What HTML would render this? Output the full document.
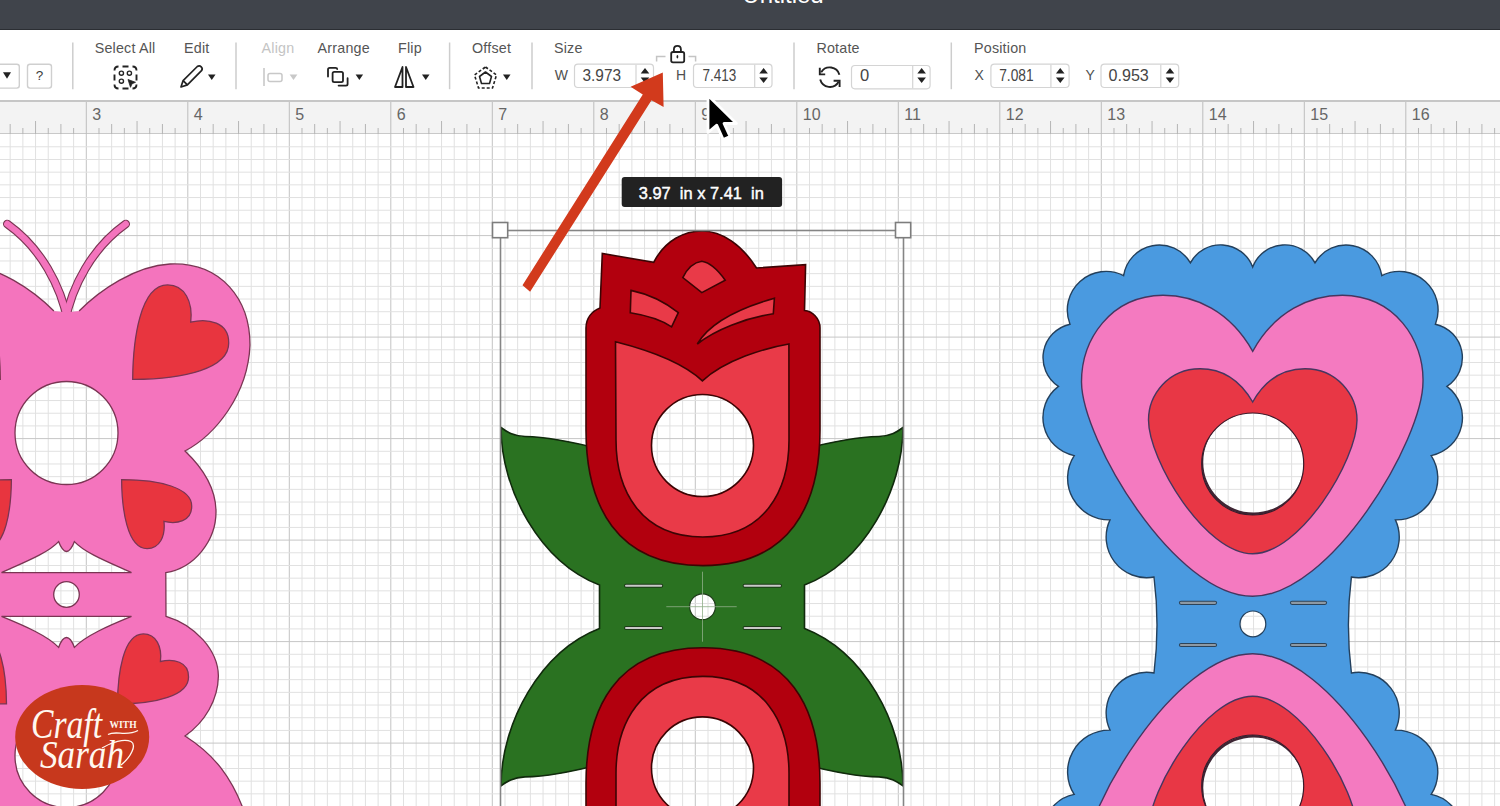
<!DOCTYPE html>
<html><head><meta charset="utf-8"><title>Design</title>
<style>
html,body{margin:0;padding:0;width:1500px;height:806px;overflow:hidden;background:#fff;}
svg{position:absolute;left:0;top:0;font-family:"Liberation Sans",sans-serif;}
</style></head><body>
<svg width="1500" height="806" viewBox="0 0 1500 806">
<rect x="0" y="0" width="1500" height="806" fill="#fff"/>
<line x1="10.17" y1="134" x2="10.17" y2="806" stroke="#e1e1e1" stroke-width="1"/>
<line x1="22.86" y1="134" x2="22.86" y2="806" stroke="#e1e1e1" stroke-width="1"/>
<line x1="35.55" y1="134" x2="35.55" y2="806" stroke="#e1e1e1" stroke-width="1"/>
<line x1="48.24" y1="134" x2="48.24" y2="806" stroke="#e1e1e1" stroke-width="1"/>
<line x1="60.92" y1="134" x2="60.92" y2="806" stroke="#e1e1e1" stroke-width="1"/>
<line x1="73.61" y1="134" x2="73.61" y2="806" stroke="#e1e1e1" stroke-width="1"/>
<line x1="86.3" y1="134" x2="86.3" y2="806" stroke="#c3c3c3" stroke-width="1"/>
<line x1="98.99" y1="134" x2="98.99" y2="806" stroke="#e1e1e1" stroke-width="1"/>
<line x1="111.67" y1="134" x2="111.67" y2="806" stroke="#e1e1e1" stroke-width="1"/>
<line x1="124.36" y1="134" x2="124.36" y2="806" stroke="#e1e1e1" stroke-width="1"/>
<line x1="137.05" y1="134" x2="137.05" y2="806" stroke="#e1e1e1" stroke-width="1"/>
<line x1="149.74" y1="134" x2="149.74" y2="806" stroke="#e1e1e1" stroke-width="1"/>
<line x1="162.43" y1="134" x2="162.43" y2="806" stroke="#e1e1e1" stroke-width="1"/>
<line x1="175.11" y1="134" x2="175.11" y2="806" stroke="#e1e1e1" stroke-width="1"/>
<line x1="187.8" y1="134" x2="187.8" y2="806" stroke="#c3c3c3" stroke-width="1"/>
<line x1="200.49" y1="134" x2="200.49" y2="806" stroke="#e1e1e1" stroke-width="1"/>
<line x1="213.18" y1="134" x2="213.18" y2="806" stroke="#e1e1e1" stroke-width="1"/>
<line x1="225.86" y1="134" x2="225.86" y2="806" stroke="#e1e1e1" stroke-width="1"/>
<line x1="238.55" y1="134" x2="238.55" y2="806" stroke="#e1e1e1" stroke-width="1"/>
<line x1="251.24" y1="134" x2="251.24" y2="806" stroke="#e1e1e1" stroke-width="1"/>
<line x1="263.93" y1="134" x2="263.93" y2="806" stroke="#e1e1e1" stroke-width="1"/>
<line x1="276.61" y1="134" x2="276.61" y2="806" stroke="#e1e1e1" stroke-width="1"/>
<line x1="289.3" y1="134" x2="289.3" y2="806" stroke="#c3c3c3" stroke-width="1"/>
<line x1="301.99" y1="134" x2="301.99" y2="806" stroke="#e1e1e1" stroke-width="1"/>
<line x1="314.68" y1="134" x2="314.68" y2="806" stroke="#e1e1e1" stroke-width="1"/>
<line x1="327.36" y1="134" x2="327.36" y2="806" stroke="#e1e1e1" stroke-width="1"/>
<line x1="340.05" y1="134" x2="340.05" y2="806" stroke="#e1e1e1" stroke-width="1"/>
<line x1="352.74" y1="134" x2="352.74" y2="806" stroke="#e1e1e1" stroke-width="1"/>
<line x1="365.43" y1="134" x2="365.43" y2="806" stroke="#e1e1e1" stroke-width="1"/>
<line x1="378.11" y1="134" x2="378.11" y2="806" stroke="#e1e1e1" stroke-width="1"/>
<line x1="390.8" y1="134" x2="390.8" y2="806" stroke="#c3c3c3" stroke-width="1"/>
<line x1="403.49" y1="134" x2="403.49" y2="806" stroke="#e1e1e1" stroke-width="1"/>
<line x1="416.18" y1="134" x2="416.18" y2="806" stroke="#e1e1e1" stroke-width="1"/>
<line x1="428.86" y1="134" x2="428.86" y2="806" stroke="#e1e1e1" stroke-width="1"/>
<line x1="441.55" y1="134" x2="441.55" y2="806" stroke="#e1e1e1" stroke-width="1"/>
<line x1="454.24" y1="134" x2="454.24" y2="806" stroke="#e1e1e1" stroke-width="1"/>
<line x1="466.93" y1="134" x2="466.93" y2="806" stroke="#e1e1e1" stroke-width="1"/>
<line x1="479.61" y1="134" x2="479.61" y2="806" stroke="#e1e1e1" stroke-width="1"/>
<line x1="492.3" y1="134" x2="492.3" y2="806" stroke="#c3c3c3" stroke-width="1"/>
<line x1="504.99" y1="134" x2="504.99" y2="806" stroke="#e1e1e1" stroke-width="1"/>
<line x1="517.67" y1="134" x2="517.67" y2="806" stroke="#e1e1e1" stroke-width="1"/>
<line x1="530.36" y1="134" x2="530.36" y2="806" stroke="#e1e1e1" stroke-width="1"/>
<line x1="543.05" y1="134" x2="543.05" y2="806" stroke="#e1e1e1" stroke-width="1"/>
<line x1="555.74" y1="134" x2="555.74" y2="806" stroke="#e1e1e1" stroke-width="1"/>
<line x1="568.42" y1="134" x2="568.42" y2="806" stroke="#e1e1e1" stroke-width="1"/>
<line x1="581.11" y1="134" x2="581.11" y2="806" stroke="#e1e1e1" stroke-width="1"/>
<line x1="593.8" y1="134" x2="593.8" y2="806" stroke="#c3c3c3" stroke-width="1"/>
<line x1="606.49" y1="134" x2="606.49" y2="806" stroke="#e1e1e1" stroke-width="1"/>
<line x1="619.17" y1="134" x2="619.17" y2="806" stroke="#e1e1e1" stroke-width="1"/>
<line x1="631.86" y1="134" x2="631.86" y2="806" stroke="#e1e1e1" stroke-width="1"/>
<line x1="644.55" y1="134" x2="644.55" y2="806" stroke="#e1e1e1" stroke-width="1"/>
<line x1="657.24" y1="134" x2="657.24" y2="806" stroke="#e1e1e1" stroke-width="1"/>
<line x1="669.92" y1="134" x2="669.92" y2="806" stroke="#e1e1e1" stroke-width="1"/>
<line x1="682.61" y1="134" x2="682.61" y2="806" stroke="#e1e1e1" stroke-width="1"/>
<line x1="695.3" y1="134" x2="695.3" y2="806" stroke="#c3c3c3" stroke-width="1"/>
<line x1="707.99" y1="134" x2="707.99" y2="806" stroke="#e1e1e1" stroke-width="1"/>
<line x1="720.67" y1="134" x2="720.67" y2="806" stroke="#e1e1e1" stroke-width="1"/>
<line x1="733.36" y1="134" x2="733.36" y2="806" stroke="#e1e1e1" stroke-width="1"/>
<line x1="746.05" y1="134" x2="746.05" y2="806" stroke="#e1e1e1" stroke-width="1"/>
<line x1="758.74" y1="134" x2="758.74" y2="806" stroke="#e1e1e1" stroke-width="1"/>
<line x1="771.42" y1="134" x2="771.42" y2="806" stroke="#e1e1e1" stroke-width="1"/>
<line x1="784.11" y1="134" x2="784.11" y2="806" stroke="#e1e1e1" stroke-width="1"/>
<line x1="796.8" y1="134" x2="796.8" y2="806" stroke="#c3c3c3" stroke-width="1"/>
<line x1="809.49" y1="134" x2="809.49" y2="806" stroke="#e1e1e1" stroke-width="1"/>
<line x1="822.17" y1="134" x2="822.17" y2="806" stroke="#e1e1e1" stroke-width="1"/>
<line x1="834.86" y1="134" x2="834.86" y2="806" stroke="#e1e1e1" stroke-width="1"/>
<line x1="847.55" y1="134" x2="847.55" y2="806" stroke="#e1e1e1" stroke-width="1"/>
<line x1="860.24" y1="134" x2="860.24" y2="806" stroke="#e1e1e1" stroke-width="1"/>
<line x1="872.92" y1="134" x2="872.92" y2="806" stroke="#e1e1e1" stroke-width="1"/>
<line x1="885.61" y1="134" x2="885.61" y2="806" stroke="#e1e1e1" stroke-width="1"/>
<line x1="898.3" y1="134" x2="898.3" y2="806" stroke="#c3c3c3" stroke-width="1"/>
<line x1="910.99" y1="134" x2="910.99" y2="806" stroke="#e1e1e1" stroke-width="1"/>
<line x1="923.67" y1="134" x2="923.67" y2="806" stroke="#e1e1e1" stroke-width="1"/>
<line x1="936.36" y1="134" x2="936.36" y2="806" stroke="#e1e1e1" stroke-width="1"/>
<line x1="949.05" y1="134" x2="949.05" y2="806" stroke="#e1e1e1" stroke-width="1"/>
<line x1="961.74" y1="134" x2="961.74" y2="806" stroke="#e1e1e1" stroke-width="1"/>
<line x1="974.42" y1="134" x2="974.42" y2="806" stroke="#e1e1e1" stroke-width="1"/>
<line x1="987.11" y1="134" x2="987.11" y2="806" stroke="#e1e1e1" stroke-width="1"/>
<line x1="999.8" y1="134" x2="999.8" y2="806" stroke="#c3c3c3" stroke-width="1"/>
<line x1="1012.49" y1="134" x2="1012.49" y2="806" stroke="#e1e1e1" stroke-width="1"/>
<line x1="1025.17" y1="134" x2="1025.17" y2="806" stroke="#e1e1e1" stroke-width="1"/>
<line x1="1037.86" y1="134" x2="1037.86" y2="806" stroke="#e1e1e1" stroke-width="1"/>
<line x1="1050.55" y1="134" x2="1050.55" y2="806" stroke="#e1e1e1" stroke-width="1"/>
<line x1="1063.24" y1="134" x2="1063.24" y2="806" stroke="#e1e1e1" stroke-width="1"/>
<line x1="1075.92" y1="134" x2="1075.92" y2="806" stroke="#e1e1e1" stroke-width="1"/>
<line x1="1088.61" y1="134" x2="1088.61" y2="806" stroke="#e1e1e1" stroke-width="1"/>
<line x1="1101.3" y1="134" x2="1101.3" y2="806" stroke="#c3c3c3" stroke-width="1"/>
<line x1="1113.99" y1="134" x2="1113.99" y2="806" stroke="#e1e1e1" stroke-width="1"/>
<line x1="1126.67" y1="134" x2="1126.67" y2="806" stroke="#e1e1e1" stroke-width="1"/>
<line x1="1139.36" y1="134" x2="1139.36" y2="806" stroke="#e1e1e1" stroke-width="1"/>
<line x1="1152.05" y1="134" x2="1152.05" y2="806" stroke="#e1e1e1" stroke-width="1"/>
<line x1="1164.74" y1="134" x2="1164.74" y2="806" stroke="#e1e1e1" stroke-width="1"/>
<line x1="1177.42" y1="134" x2="1177.42" y2="806" stroke="#e1e1e1" stroke-width="1"/>
<line x1="1190.11" y1="134" x2="1190.11" y2="806" stroke="#e1e1e1" stroke-width="1"/>
<line x1="1202.8" y1="134" x2="1202.8" y2="806" stroke="#c3c3c3" stroke-width="1"/>
<line x1="1215.49" y1="134" x2="1215.49" y2="806" stroke="#e1e1e1" stroke-width="1"/>
<line x1="1228.17" y1="134" x2="1228.17" y2="806" stroke="#e1e1e1" stroke-width="1"/>
<line x1="1240.86" y1="134" x2="1240.86" y2="806" stroke="#e1e1e1" stroke-width="1"/>
<line x1="1253.55" y1="134" x2="1253.55" y2="806" stroke="#e1e1e1" stroke-width="1"/>
<line x1="1266.24" y1="134" x2="1266.24" y2="806" stroke="#e1e1e1" stroke-width="1"/>
<line x1="1278.92" y1="134" x2="1278.92" y2="806" stroke="#e1e1e1" stroke-width="1"/>
<line x1="1291.61" y1="134" x2="1291.61" y2="806" stroke="#e1e1e1" stroke-width="1"/>
<line x1="1304.3" y1="134" x2="1304.3" y2="806" stroke="#c3c3c3" stroke-width="1"/>
<line x1="1316.99" y1="134" x2="1316.99" y2="806" stroke="#e1e1e1" stroke-width="1"/>
<line x1="1329.67" y1="134" x2="1329.67" y2="806" stroke="#e1e1e1" stroke-width="1"/>
<line x1="1342.36" y1="134" x2="1342.36" y2="806" stroke="#e1e1e1" stroke-width="1"/>
<line x1="1355.05" y1="134" x2="1355.05" y2="806" stroke="#e1e1e1" stroke-width="1"/>
<line x1="1367.74" y1="134" x2="1367.74" y2="806" stroke="#e1e1e1" stroke-width="1"/>
<line x1="1380.42" y1="134" x2="1380.42" y2="806" stroke="#e1e1e1" stroke-width="1"/>
<line x1="1393.11" y1="134" x2="1393.11" y2="806" stroke="#e1e1e1" stroke-width="1"/>
<line x1="1405.8" y1="134" x2="1405.8" y2="806" stroke="#c3c3c3" stroke-width="1"/>
<line x1="1418.49" y1="134" x2="1418.49" y2="806" stroke="#e1e1e1" stroke-width="1"/>
<line x1="1431.17" y1="134" x2="1431.17" y2="806" stroke="#e1e1e1" stroke-width="1"/>
<line x1="1443.86" y1="134" x2="1443.86" y2="806" stroke="#e1e1e1" stroke-width="1"/>
<line x1="1456.55" y1="134" x2="1456.55" y2="806" stroke="#e1e1e1" stroke-width="1"/>
<line x1="1469.24" y1="134" x2="1469.24" y2="806" stroke="#e1e1e1" stroke-width="1"/>
<line x1="1481.92" y1="134" x2="1481.92" y2="806" stroke="#e1e1e1" stroke-width="1"/>
<line x1="1494.61" y1="134" x2="1494.61" y2="806" stroke="#e1e1e1" stroke-width="1"/>
<line x1="0" y1="146.79" x2="1500" y2="146.79" stroke="#e1e1e1" stroke-width="1"/>
<line x1="0" y1="159.47" x2="1500" y2="159.47" stroke="#e1e1e1" stroke-width="1"/>
<line x1="0" y1="172.16" x2="1500" y2="172.16" stroke="#e1e1e1" stroke-width="1"/>
<line x1="0" y1="184.85" x2="1500" y2="184.85" stroke="#e1e1e1" stroke-width="1"/>
<line x1="0" y1="197.54" x2="1500" y2="197.54" stroke="#e1e1e1" stroke-width="1"/>
<line x1="0" y1="210.22" x2="1500" y2="210.22" stroke="#e1e1e1" stroke-width="1"/>
<line x1="0" y1="222.91" x2="1500" y2="222.91" stroke="#e1e1e1" stroke-width="1"/>
<line x1="0" y1="235.6" x2="1500" y2="235.6" stroke="#c6c6c6" stroke-width="1"/>
<line x1="0" y1="248.29" x2="1500" y2="248.29" stroke="#e1e1e1" stroke-width="1"/>
<line x1="0" y1="260.98" x2="1500" y2="260.98" stroke="#e1e1e1" stroke-width="1"/>
<line x1="0" y1="273.66" x2="1500" y2="273.66" stroke="#e1e1e1" stroke-width="1"/>
<line x1="0" y1="286.35" x2="1500" y2="286.35" stroke="#e1e1e1" stroke-width="1"/>
<line x1="0" y1="299.04" x2="1500" y2="299.04" stroke="#e1e1e1" stroke-width="1"/>
<line x1="0" y1="311.73" x2="1500" y2="311.73" stroke="#e1e1e1" stroke-width="1"/>
<line x1="0" y1="324.41" x2="1500" y2="324.41" stroke="#e1e1e1" stroke-width="1"/>
<line x1="0" y1="337.1" x2="1500" y2="337.1" stroke="#c6c6c6" stroke-width="1"/>
<line x1="0" y1="349.79" x2="1500" y2="349.79" stroke="#e1e1e1" stroke-width="1"/>
<line x1="0" y1="362.48" x2="1500" y2="362.48" stroke="#e1e1e1" stroke-width="1"/>
<line x1="0" y1="375.16" x2="1500" y2="375.16" stroke="#e1e1e1" stroke-width="1"/>
<line x1="0" y1="387.85" x2="1500" y2="387.85" stroke="#e1e1e1" stroke-width="1"/>
<line x1="0" y1="400.54" x2="1500" y2="400.54" stroke="#e1e1e1" stroke-width="1"/>
<line x1="0" y1="413.23" x2="1500" y2="413.23" stroke="#e1e1e1" stroke-width="1"/>
<line x1="0" y1="425.91" x2="1500" y2="425.91" stroke="#e1e1e1" stroke-width="1"/>
<line x1="0" y1="438.6" x2="1500" y2="438.6" stroke="#c6c6c6" stroke-width="1"/>
<line x1="0" y1="451.29" x2="1500" y2="451.29" stroke="#e1e1e1" stroke-width="1"/>
<line x1="0" y1="463.98" x2="1500" y2="463.98" stroke="#e1e1e1" stroke-width="1"/>
<line x1="0" y1="476.66" x2="1500" y2="476.66" stroke="#e1e1e1" stroke-width="1"/>
<line x1="0" y1="489.35" x2="1500" y2="489.35" stroke="#e1e1e1" stroke-width="1"/>
<line x1="0" y1="502.04" x2="1500" y2="502.04" stroke="#e1e1e1" stroke-width="1"/>
<line x1="0" y1="514.73" x2="1500" y2="514.73" stroke="#e1e1e1" stroke-width="1"/>
<line x1="0" y1="527.41" x2="1500" y2="527.41" stroke="#e1e1e1" stroke-width="1"/>
<line x1="0" y1="540.1" x2="1500" y2="540.1" stroke="#c6c6c6" stroke-width="1"/>
<line x1="0" y1="552.79" x2="1500" y2="552.79" stroke="#e1e1e1" stroke-width="1"/>
<line x1="0" y1="565.48" x2="1500" y2="565.48" stroke="#e1e1e1" stroke-width="1"/>
<line x1="0" y1="578.16" x2="1500" y2="578.16" stroke="#e1e1e1" stroke-width="1"/>
<line x1="0" y1="590.85" x2="1500" y2="590.85" stroke="#e1e1e1" stroke-width="1"/>
<line x1="0" y1="603.54" x2="1500" y2="603.54" stroke="#e1e1e1" stroke-width="1"/>
<line x1="0" y1="616.23" x2="1500" y2="616.23" stroke="#e1e1e1" stroke-width="1"/>
<line x1="0" y1="628.91" x2="1500" y2="628.91" stroke="#e1e1e1" stroke-width="1"/>
<line x1="0" y1="641.6" x2="1500" y2="641.6" stroke="#c6c6c6" stroke-width="1"/>
<line x1="0" y1="654.29" x2="1500" y2="654.29" stroke="#e1e1e1" stroke-width="1"/>
<line x1="0" y1="666.98" x2="1500" y2="666.98" stroke="#e1e1e1" stroke-width="1"/>
<line x1="0" y1="679.66" x2="1500" y2="679.66" stroke="#e1e1e1" stroke-width="1"/>
<line x1="0" y1="692.35" x2="1500" y2="692.35" stroke="#e1e1e1" stroke-width="1"/>
<line x1="0" y1="705.04" x2="1500" y2="705.04" stroke="#e1e1e1" stroke-width="1"/>
<line x1="0" y1="717.73" x2="1500" y2="717.73" stroke="#e1e1e1" stroke-width="1"/>
<line x1="0" y1="730.41" x2="1500" y2="730.41" stroke="#e1e1e1" stroke-width="1"/>
<line x1="0" y1="743.1" x2="1500" y2="743.1" stroke="#c6c6c6" stroke-width="1"/>
<line x1="0" y1="755.79" x2="1500" y2="755.79" stroke="#e1e1e1" stroke-width="1"/>
<line x1="0" y1="768.48" x2="1500" y2="768.48" stroke="#e1e1e1" stroke-width="1"/>
<line x1="0" y1="781.16" x2="1500" y2="781.16" stroke="#e1e1e1" stroke-width="1"/>
<line x1="0" y1="793.85" x2="1500" y2="793.85" stroke="#e1e1e1" stroke-width="1"/>
<defs><mask id="mb"><rect x="-100" y="134" width="400" height="700" fill="#fff"/><circle cx="66.5" cy="433" r="51.5" fill="#000"/><circle cx="66.5" cy="756" r="51.5" fill="#000"/><circle cx="66.5" cy="594.5" r="12.8" fill="#000"/><path d="M 131.5 572.6 C 108 562, 85 553, 74.4 541.6 C 72 548, 69 551.5, 66.5 551.5 C 64 551.5, 61 548, 58.6 541.6 C 48 553, 25 562, 1.5 572.6 Z" fill="#000"/><path d="M 131.5 616.4 C 108 626, 85 636, 74.4 647.4 C 72 641, 69 637.5, 66.5 637.5 C 64 637.5, 61 641, 58.6 647.4 C 48 636, 25 626, 1.5 616.4 Z" fill="#000"/></mask></defs>
<path d="M 65 322 C 72 286, 92 248, 125.7 224" fill="none" stroke="#7a3553" stroke-width="8.6" stroke-linecap="round"/>
<path d="M 68 322 C 61 286, 41 248, 7.3 224" fill="none" stroke="#7a3553" stroke-width="8.6" stroke-linecap="round"/>
<path d="M 65 322 C 72 286, 92 248, 125.7 224" fill="none" stroke="#f474bd" stroke-width="6.4" stroke-linecap="round"/>
<path d="M 68 322 C 61 286, 41 248, 7.3 224" fill="none" stroke="#f474bd" stroke-width="6.4" stroke-linecap="round"/>
<g mask="url(#mb)">
<path d="M 60 313 L 79.1 311 C 100 290, 135 266, 170 264 C 222 262, 250 300, 250 345 C 248 395, 215 435, 185 451 C 205 470, 216 490, 216 512 C 216 540, 195 568, 165.8 572.6 L 166 616.3 C 195 625, 218 650, 218.4 676 C 218 700, 205 722, 185 736 C 210 752, 235 775, 250 830 L 60 830 Z" fill="#f474bd"/>
<g transform="translate(133 0) scale(-1 1)"><path d="M 60 313 L 79.1 311 C 100 290, 135 266, 170 264 C 222 262, 250 300, 250 345 C 248 395, 215 435, 185 451 C 205 470, 216 490, 216 512 C 216 540, 195 568, 165.8 572.6 L 166 616.3 C 195 625, 218 650, 218.4 676 C 218 700, 205 722, 185 736 C 210 752, 235 775, 250 830 L 60 830 Z" fill="#f474bd"/></g>
<path d="M 79.1 311 C 100 290, 135 266, 170 264 C 222 262, 250 300, 250 345 C 248 395, 215 435, 185 451 C 205 470, 216 490, 216 512 C 216 540, 195 568, 165.8 572.6 L 166 616.3 C 195 625, 218 650, 218.4 676 C 218 700, 205 722, 185 736 C 210 752, 235 775, 250 830" fill="none" stroke="#7a3553" stroke-width="1.3"/>
<g transform="translate(133 0) scale(-1 1)"><path d="M 79.1 311 C 100 290, 135 266, 170 264 C 222 262, 250 300, 250 345 C 248 395, 215 435, 185 451 C 205 470, 216 490, 216 512 C 216 540, 195 568, 165.8 572.6 L 166 616.3 C 195 625, 218 650, 218.4 676 C 218 700, 205 722, 185 736 C 210 752, 235 775, 250 830" fill="none" stroke="#7a3553" stroke-width="1.3"/></g>
<g transform=""><path d="M 132.7 379.4 C 133 340, 140 285, 167.6 284.9 C 185 285, 193 302, 190.7 322.1 C 208 318, 229 322, 228.7 343 C 229 368, 185 379.5, 132.7 379.4 Z" fill="#e8353f" stroke="#7a3553" stroke-width="1.3"/></g>
<g transform="translate(133 0) scale(-1 1)"><g transform=""><path d="M 132.7 379.4 C 133 340, 140 285, 167.6 284.9 C 185 285, 193 302, 190.7 322.1 C 208 318, 229 322, 228.7 343 C 229 368, 185 379.5, 132.7 379.4 Z" fill="#e8353f" stroke="#7a3553" stroke-width="1.3"/></g></g>
<g transform="translate(121.6 479.6) scale(0.73 -0.73) translate(-132.7 -379.4)"><path d="M 132.7 379.4 C 133 340, 140 285, 167.6 284.9 C 185 285, 193 302, 190.7 322.1 C 208 318, 229 322, 228.7 343 C 229 368, 185 379.5, 132.7 379.4 Z" fill="#e8353f" stroke="#7a3553" stroke-width="1.75"/></g>
<g transform="translate(133 0) scale(-1 1)"><g transform="translate(121.6 479.6) scale(0.73 -0.73) translate(-132.7 -379.4)"><path d="M 132.7 379.4 C 133 340, 140 285, 167.6 284.9 C 185 285, 193 302, 190.7 322.1 C 208 318, 229 322, 228.7 343 C 229 368, 185 379.5, 132.7 379.4 Z" fill="#e8353f" stroke="#7a3553" stroke-width="1.75"/></g></g>
<g transform="translate(117.5 703.9) scale(0.74) translate(-132.7 -379.4)"><path d="M 132.7 379.4 C 133 340, 140 285, 167.6 284.9 C 185 285, 193 302, 190.7 322.1 C 208 318, 229 322, 228.7 343 C 229 368, 185 379.5, 132.7 379.4 Z" fill="#e8353f" stroke="#7a3553" stroke-width="1.75"/></g>
<g transform="translate(124 0) scale(-1 1)"><g transform="translate(117.5 703.9) scale(0.74) translate(-132.7 -379.4)"><path d="M 132.7 379.4 C 133 340, 140 285, 167.6 284.9 C 185 285, 193 302, 190.7 322.1 C 208 318, 229 322, 228.7 343 C 229 368, 185 379.5, 132.7 379.4 Z" fill="#e8353f" stroke="#7a3553" stroke-width="1.75"/></g></g>
</g>
<circle cx="66.5" cy="433" r="51.5" fill="none" stroke="#7a3553" stroke-width="1.3"/>
<circle cx="66.5" cy="756" r="51.5" fill="none" stroke="#7a3553" stroke-width="1.3"/>
<circle cx="66.5" cy="594.5" r="12.8" fill="none" stroke="#7a3553" stroke-width="1.3"/>
<path d="M 131.5 572.6 C 108 562, 85 553, 74.4 541.6 C 72 548, 69 551.5, 66.5 551.5 C 64 551.5, 61 548, 58.6 541.6 C 48 553, 25 562, 1.5 572.6 Z" fill="none" stroke="#7a3553" stroke-width="1.3"/>
<path d="M 131.5 616.4 C 108 626, 85 636, 74.4 647.4 C 72 641, 69 637.5, 66.5 637.5 C 64 637.5, 61 641, 58.6 647.4 C 48 636, 25 626, 1.5 616.4 Z" fill="none" stroke="#7a3553" stroke-width="1.3"/>
<defs><mask id="mr"><rect x="480" y="134" width="450" height="700" fill="#fff"/><circle cx="702.5" cy="445.5" r="51" fill="#000"/><circle cx="702.5" cy="767.9" r="51" fill="#000"/><circle cx="702.5" cy="606.7" r="12.9" fill="#000"/></mask></defs>
<g mask="url(#mr)">
<path d="M 501 427.5 C 507 432, 513 436, 525 436.5 C 545 437, 565 440, 600 449 L 804 449 C 839 440, 859 437, 879 436.5 C 891 436, 897 432, 903 427.5 C 903 490, 864 562, 804.5 585 L 804.5 628.4 C 864 651.4, 903 723.4, 903 785.9 C 897 781.4, 891 777.4, 879 776.9 C 859 776.4, 839 773.4, 804 764.4 L 600 764.4 C 565 773.4, 545 776.4, 525 776.9 C 513 777.4, 507 781.4, 501 785.9 C 501 723.4, 540 651.4, 599.5 628.4 L 599.5 585 C 540 562, 501 490, 501 427.5 Z" fill="#2a7221" stroke="#102a0c" stroke-width="1.6"/>
<path d="M 653.7 262.4 C 665 240, 685 231, 702 231 C 722 231, 742 245, 756.5 268 L 805.6 264.7 L 804.5 310.5 C 812 311, 820 318, 820 328 L 820 430 C 820 505, 790 565.6, 703 565.6 C 616 565.6, 586 505, 586 430 L 586 328 C 586 318, 592 311, 600 308 L 602.3 253.5 Z" fill="#b2000e" stroke="#3c0404" stroke-width="1.6"/>
<path d="M 586 830 L 586 783.4 C 586 708.4, 616 647.8, 703 647.8 C 790 647.8, 820 708.4, 820 783.4 L 820 830 Z" fill="#b2000e" stroke="#3c0404" stroke-width="1.6"/>
<path d="M 615.5 341.8 C 640 348, 680 360, 702.4 380.9 C 725 360, 765 348, 788.9 344 L 789 440 C 789 490, 765 537, 702.75 537 C 640.5 537, 616 490, 616 440 Z" fill="#e93a48" stroke="#3c0404" stroke-width="1.6"/>
<path d="M 616 830 L 616 773.4 C 616 723.4, 640.5 676.4, 702.75 676.4 C 765 676.4, 789 723.4, 789 773.4 L 789 830 Z" fill="#e93a48" stroke="#3c0404" stroke-width="1.6"/>
<path d="M 682.8 277.6 Q 690 263, 701.8 261.3 Q 713 263, 725.2 280.3 L 701.8 292.6 Z" fill="#e93a48" stroke="#3c0404" stroke-width="1.6"/>
<path d="M 631 290.4 C 648 294, 665 302, 678.3 312.7 L 671.6 326.8 C 660 319, 645 315, 630.3 312.7 Z" fill="#e93a48" stroke="#3c0404" stroke-width="1.6"/>
<path d="M 697.3 344 C 710 322, 740 308, 774.4 298.2 L 773.3 313.8 C 745 318, 715 330, 697.3 344 Z" fill="#e93a48" stroke="#3c0404" stroke-width="1.6"/>
</g>
<circle cx="702.5" cy="445.5" r="51" fill="none" stroke="#3c0404" stroke-width="1.6"/>
<circle cx="702.5" cy="767.9" r="51" fill="none" stroke="#3c0404" stroke-width="1.6"/>
<circle cx="702.5" cy="606.7" r="12.9" fill="none" stroke="#1d3a18" stroke-width="1.2"/>
<line x1="702.5" y1="571.7" x2="702.5" y2="641.7" stroke="#8fae88" stroke-width="1" opacity="0.8"/>
<line x1="666.3" y1="606.7" x2="736.7" y2="606.7" stroke="#8fae88" stroke-width="1" opacity="0.8"/>
<line x1="626" y1="585.8" x2="661.2" y2="585.8" stroke="#1d3a18" stroke-width="4" stroke-linecap="round"/>
<line x1="626" y1="585.8" x2="661.2" y2="585.8" stroke="#c9c9c9" stroke-width="2" stroke-linecap="round"/>
<line x1="744.6" y1="585.8" x2="780" y2="585.8" stroke="#1d3a18" stroke-width="4" stroke-linecap="round"/>
<line x1="744.6" y1="585.8" x2="780" y2="585.8" stroke="#c9c9c9" stroke-width="2" stroke-linecap="round"/>
<line x1="626" y1="628" x2="661.2" y2="628" stroke="#1d3a18" stroke-width="4" stroke-linecap="round"/>
<line x1="626" y1="628" x2="661.2" y2="628" stroke="#c9c9c9" stroke-width="2" stroke-linecap="round"/>
<line x1="744.6" y1="628" x2="780" y2="628" stroke="#1d3a18" stroke-width="4" stroke-linecap="round"/>
<line x1="744.6" y1="628" x2="780" y2="628" stroke="#c9c9c9" stroke-width="2" stroke-linecap="round"/>
<defs><mask id="mh"><rect x="1000" y="134" width="500" height="700" fill="#fff"/><circle cx="1252.7" cy="464" r="51" fill="#000"/><circle cx="1252.7" cy="786.0" r="51" fill="#000"/><circle cx="1252.9" cy="623.9" r="12.9" fill="#000"/></mask></defs>
<g mask="url(#mh)">
<path d="M 1252.7 267 A 34.37 34.37 0 0 0 1190.4 262.8 A 36.11 36.11 0 0 0 1123.6 275.7 A 38.63 38.63 0 0 0 1070.0 324.2 A 34.32 34.32 0 0 0 1058.5 386.4 A 38.86 38.86 0 0 0 1074.2 455.6 A 41.77 41.77 0 0 0 1110.0 519.9 A 40.53 40.53 0 0 0 1154.0 577.0 Q 1160 625.0 1154 673.0 A 40.53 40.53 0 0 0 1110.0 730.1 A 41.77 41.77 0 0 0 1074.2 794.4 A 38.86 38.86 0 0 0 1058.5 863.6 A 34.32 34.32 0 0 0 1070.0 925.8 A 38.63 38.63 0 0 0 1123.6 974.3 A 36.11 36.11 0 0 0 1190.4 987.2 A 34.37 34.37 0 0 0 1252.7 983.0 A 34.37 34.37 0 0 0 1315.0 987.2 A 36.11 36.11 0 0 0 1381.8 974.3 A 38.63 38.63 0 0 0 1435.4 925.8 A 34.32 34.32 0 0 0 1446.9 863.6 A 38.86 38.86 0 0 0 1431.2 794.4 A 41.77 41.77 0 0 0 1395.4 730.1 A 40.53 40.53 0 0 0 1351.4 673.0 Q 1345.4 625.0 1351.4 577 A 40.53 40.53 0 0 0 1395.4 519.9 A 41.77 41.77 0 0 0 1431.2 455.6 A 38.86 38.86 0 0 0 1446.9 386.4 A 34.32 34.32 0 0 0 1435.4 324.2 A 38.63 38.63 0 0 0 1381.8 275.7 A 36.11 36.11 0 0 0 1315.0 262.8 A 34.37 34.37 0 0 0 1252.7 267.0 Z" fill="#4a9ae0" stroke="#24405c" stroke-width="1.4"/>
<path d="M 1252.7 351.3 C 1230 311, 1195 295.3, 1163 295.3 C 1110 296, 1081.5 340, 1081.5 382 C 1082 440, 1175 596.3, 1252.7 596.3 C 1330.4 596.3, 1423 440, 1423 381.5 C 1423.9 340, 1395 296, 1342.4 295.3 C 1310 295.3, 1275 311, 1252.7 351.3 Z" fill="#f47ac0" stroke="#463660" stroke-width="1.4"/>
<g transform="translate(0 1250.0) scale(1 -1)"><path d="M 1252.7 351.3 C 1230 311, 1195 295.3, 1163 295.3 C 1110 296, 1081.5 340, 1081.5 382 C 1082 440, 1175 596.3, 1252.7 596.3 C 1330.4 596.3, 1423 440, 1423 381.5 C 1423.9 340, 1395 296, 1342.4 295.3 C 1310 295.3, 1275 311, 1252.7 351.3 Z" fill="#f47ac0" stroke="#463660" stroke-width="1.4"/></g>
<path d="M 1252.7 402 C 1240 380, 1222 368.7, 1200 368.7 C 1168 368.7, 1148.5 395, 1148.5 420 C 1148.5 460, 1205 553.7, 1252.7 553.7 C 1300.4 553.7, 1357 460, 1357 420 C 1357 395, 1337 368.7, 1305 368.7 C 1283 368.7, 1265 380, 1252.7 402 Z" fill="#e83745" stroke="#463660" stroke-width="1.4"/>
<g transform="translate(0 1250.0) scale(1 -1)"><path d="M 1252.7 402 C 1240 380, 1222 368.7, 1200 368.7 C 1168 368.7, 1148.5 395, 1148.5 420 C 1148.5 460, 1205 553.7, 1252.7 553.7 C 1300.4 553.7, 1357 460, 1357 420 C 1357 395, 1337 368.7, 1305 368.7 C 1283 368.7, 1265 380, 1252.7 402 Z" fill="#e83745" stroke="#463660" stroke-width="1.4"/></g>
</g>
<clipPath id="hc1"><circle cx="1252.7" cy="464" r="51"/></clipPath><clipPath id="hc2"><circle cx="1252.7" cy="786.0" r="51"/></clipPath>
<path clip-path="url(#hc1)" fill-rule="evenodd" d="M 1190 400 L 1320 400 L 1320 530 L 1190 530 Z M 1304.2 462 A 50.5 50.5 0 1 0 1203.2 462 A 50.5 50.5 0 1 0 1304.2 462 Z" fill="#3e2634"/>
<path clip-path="url(#hc2)" fill-rule="evenodd" d="M 1190 722.0 L 1320 722.0 L 1320 850.0 L 1190 850.0 Z M 1304.2 788.0 A 50.5 50.5 0 1 0 1203.2 788.0 A 50.5 50.5 0 1 0 1304.2 788.0 Z" fill="#3e2634"/>
<circle cx="1252.7" cy="464" r="51" fill="none" stroke="#3a1a2a" stroke-width="1.2"/>
<circle cx="1252.7" cy="786.0" r="51" fill="none" stroke="#3a1a2a" stroke-width="1.2"/>
<circle cx="1252.9" cy="623.9" r="12.9" fill="none" stroke="#24405c" stroke-width="1.2"/>
<line x1="1181" y1="602.8" x2="1215" y2="602.8" stroke="#2d4358" stroke-width="4.2" stroke-linecap="round"/>
<line x1="1181" y1="602.8" x2="1215" y2="602.8" stroke="#8d99a4" stroke-width="2.2" stroke-linecap="round"/>
<line x1="1292" y1="602.8" x2="1325" y2="602.8" stroke="#2d4358" stroke-width="4.2" stroke-linecap="round"/>
<line x1="1292" y1="602.8" x2="1325" y2="602.8" stroke="#8d99a4" stroke-width="2.2" stroke-linecap="round"/>
<line x1="1181" y1="645" x2="1215" y2="645" stroke="#2d4358" stroke-width="4.2" stroke-linecap="round"/>
<line x1="1181" y1="645" x2="1215" y2="645" stroke="#8d99a4" stroke-width="2.2" stroke-linecap="round"/>
<line x1="1292" y1="645" x2="1325" y2="645" stroke="#2d4358" stroke-width="4.2" stroke-linecap="round"/>
<line x1="1292" y1="645" x2="1325" y2="645" stroke="#8d99a4" stroke-width="2.2" stroke-linecap="round"/>
<rect x="0" y="30" width="1500" height="71" fill="#fff"/>
<rect x="0" y="101" width="1500" height="33" fill="#f3f3f3"/>
<rect x="0" y="100" width="1500" height="2" fill="#c6c6c6"/>
<rect x="0" y="133" width="1500" height="1" fill="#c9c9c9"/>
<line x1="10.17" y1="124" x2="10.17" y2="134" stroke="#b5b5b5" stroke-width="1"/>
<line x1="22.86" y1="128" x2="22.86" y2="134" stroke="#b5b5b5" stroke-width="1"/>
<line x1="35.55" y1="121" x2="35.55" y2="134" stroke="#b5b5b5" stroke-width="1"/>
<line x1="48.24" y1="128" x2="48.24" y2="134" stroke="#b5b5b5" stroke-width="1"/>
<line x1="60.92" y1="124" x2="60.92" y2="134" stroke="#b5b5b5" stroke-width="1"/>
<line x1="73.61" y1="128" x2="73.61" y2="134" stroke="#b5b5b5" stroke-width="1"/>
<line x1="86.3" y1="102" x2="86.3" y2="134" stroke="#bdbdbd" stroke-width="1"/>
<line x1="98.99" y1="128" x2="98.99" y2="134" stroke="#b5b5b5" stroke-width="1"/>
<line x1="111.67" y1="124" x2="111.67" y2="134" stroke="#b5b5b5" stroke-width="1"/>
<line x1="124.36" y1="128" x2="124.36" y2="134" stroke="#b5b5b5" stroke-width="1"/>
<line x1="137.05" y1="121" x2="137.05" y2="134" stroke="#b5b5b5" stroke-width="1"/>
<line x1="149.74" y1="128" x2="149.74" y2="134" stroke="#b5b5b5" stroke-width="1"/>
<line x1="162.43" y1="124" x2="162.43" y2="134" stroke="#b5b5b5" stroke-width="1"/>
<line x1="175.11" y1="128" x2="175.11" y2="134" stroke="#b5b5b5" stroke-width="1"/>
<line x1="187.8" y1="102" x2="187.8" y2="134" stroke="#bdbdbd" stroke-width="1"/>
<line x1="200.49" y1="128" x2="200.49" y2="134" stroke="#b5b5b5" stroke-width="1"/>
<line x1="213.18" y1="124" x2="213.18" y2="134" stroke="#b5b5b5" stroke-width="1"/>
<line x1="225.86" y1="128" x2="225.86" y2="134" stroke="#b5b5b5" stroke-width="1"/>
<line x1="238.55" y1="121" x2="238.55" y2="134" stroke="#b5b5b5" stroke-width="1"/>
<line x1="251.24" y1="128" x2="251.24" y2="134" stroke="#b5b5b5" stroke-width="1"/>
<line x1="263.93" y1="124" x2="263.93" y2="134" stroke="#b5b5b5" stroke-width="1"/>
<line x1="276.61" y1="128" x2="276.61" y2="134" stroke="#b5b5b5" stroke-width="1"/>
<line x1="289.3" y1="102" x2="289.3" y2="134" stroke="#bdbdbd" stroke-width="1"/>
<line x1="301.99" y1="128" x2="301.99" y2="134" stroke="#b5b5b5" stroke-width="1"/>
<line x1="314.68" y1="124" x2="314.68" y2="134" stroke="#b5b5b5" stroke-width="1"/>
<line x1="327.36" y1="128" x2="327.36" y2="134" stroke="#b5b5b5" stroke-width="1"/>
<line x1="340.05" y1="121" x2="340.05" y2="134" stroke="#b5b5b5" stroke-width="1"/>
<line x1="352.74" y1="128" x2="352.74" y2="134" stroke="#b5b5b5" stroke-width="1"/>
<line x1="365.43" y1="124" x2="365.43" y2="134" stroke="#b5b5b5" stroke-width="1"/>
<line x1="378.11" y1="128" x2="378.11" y2="134" stroke="#b5b5b5" stroke-width="1"/>
<line x1="390.8" y1="102" x2="390.8" y2="134" stroke="#bdbdbd" stroke-width="1"/>
<line x1="403.49" y1="128" x2="403.49" y2="134" stroke="#b5b5b5" stroke-width="1"/>
<line x1="416.18" y1="124" x2="416.18" y2="134" stroke="#b5b5b5" stroke-width="1"/>
<line x1="428.86" y1="128" x2="428.86" y2="134" stroke="#b5b5b5" stroke-width="1"/>
<line x1="441.55" y1="121" x2="441.55" y2="134" stroke="#b5b5b5" stroke-width="1"/>
<line x1="454.24" y1="128" x2="454.24" y2="134" stroke="#b5b5b5" stroke-width="1"/>
<line x1="466.93" y1="124" x2="466.93" y2="134" stroke="#b5b5b5" stroke-width="1"/>
<line x1="479.61" y1="128" x2="479.61" y2="134" stroke="#b5b5b5" stroke-width="1"/>
<line x1="492.3" y1="102" x2="492.3" y2="134" stroke="#bdbdbd" stroke-width="1"/>
<line x1="504.99" y1="128" x2="504.99" y2="134" stroke="#b5b5b5" stroke-width="1"/>
<line x1="517.67" y1="124" x2="517.67" y2="134" stroke="#b5b5b5" stroke-width="1"/>
<line x1="530.36" y1="128" x2="530.36" y2="134" stroke="#b5b5b5" stroke-width="1"/>
<line x1="543.05" y1="121" x2="543.05" y2="134" stroke="#b5b5b5" stroke-width="1"/>
<line x1="555.74" y1="128" x2="555.74" y2="134" stroke="#b5b5b5" stroke-width="1"/>
<line x1="568.42" y1="124" x2="568.42" y2="134" stroke="#b5b5b5" stroke-width="1"/>
<line x1="581.11" y1="128" x2="581.11" y2="134" stroke="#b5b5b5" stroke-width="1"/>
<line x1="593.8" y1="102" x2="593.8" y2="134" stroke="#bdbdbd" stroke-width="1"/>
<line x1="606.49" y1="128" x2="606.49" y2="134" stroke="#b5b5b5" stroke-width="1"/>
<line x1="619.17" y1="124" x2="619.17" y2="134" stroke="#b5b5b5" stroke-width="1"/>
<line x1="631.86" y1="128" x2="631.86" y2="134" stroke="#b5b5b5" stroke-width="1"/>
<line x1="644.55" y1="121" x2="644.55" y2="134" stroke="#b5b5b5" stroke-width="1"/>
<line x1="657.24" y1="128" x2="657.24" y2="134" stroke="#b5b5b5" stroke-width="1"/>
<line x1="669.92" y1="124" x2="669.92" y2="134" stroke="#b5b5b5" stroke-width="1"/>
<line x1="682.61" y1="128" x2="682.61" y2="134" stroke="#b5b5b5" stroke-width="1"/>
<line x1="695.3" y1="102" x2="695.3" y2="134" stroke="#bdbdbd" stroke-width="1"/>
<line x1="707.99" y1="128" x2="707.99" y2="134" stroke="#b5b5b5" stroke-width="1"/>
<line x1="720.67" y1="124" x2="720.67" y2="134" stroke="#b5b5b5" stroke-width="1"/>
<line x1="733.36" y1="128" x2="733.36" y2="134" stroke="#b5b5b5" stroke-width="1"/>
<line x1="746.05" y1="121" x2="746.05" y2="134" stroke="#b5b5b5" stroke-width="1"/>
<line x1="758.74" y1="128" x2="758.74" y2="134" stroke="#b5b5b5" stroke-width="1"/>
<line x1="771.42" y1="124" x2="771.42" y2="134" stroke="#b5b5b5" stroke-width="1"/>
<line x1="784.11" y1="128" x2="784.11" y2="134" stroke="#b5b5b5" stroke-width="1"/>
<line x1="796.8" y1="102" x2="796.8" y2="134" stroke="#bdbdbd" stroke-width="1"/>
<line x1="809.49" y1="128" x2="809.49" y2="134" stroke="#b5b5b5" stroke-width="1"/>
<line x1="822.17" y1="124" x2="822.17" y2="134" stroke="#b5b5b5" stroke-width="1"/>
<line x1="834.86" y1="128" x2="834.86" y2="134" stroke="#b5b5b5" stroke-width="1"/>
<line x1="847.55" y1="121" x2="847.55" y2="134" stroke="#b5b5b5" stroke-width="1"/>
<line x1="860.24" y1="128" x2="860.24" y2="134" stroke="#b5b5b5" stroke-width="1"/>
<line x1="872.92" y1="124" x2="872.92" y2="134" stroke="#b5b5b5" stroke-width="1"/>
<line x1="885.61" y1="128" x2="885.61" y2="134" stroke="#b5b5b5" stroke-width="1"/>
<line x1="898.3" y1="102" x2="898.3" y2="134" stroke="#bdbdbd" stroke-width="1"/>
<line x1="910.99" y1="128" x2="910.99" y2="134" stroke="#b5b5b5" stroke-width="1"/>
<line x1="923.67" y1="124" x2="923.67" y2="134" stroke="#b5b5b5" stroke-width="1"/>
<line x1="936.36" y1="128" x2="936.36" y2="134" stroke="#b5b5b5" stroke-width="1"/>
<line x1="949.05" y1="121" x2="949.05" y2="134" stroke="#b5b5b5" stroke-width="1"/>
<line x1="961.74" y1="128" x2="961.74" y2="134" stroke="#b5b5b5" stroke-width="1"/>
<line x1="974.42" y1="124" x2="974.42" y2="134" stroke="#b5b5b5" stroke-width="1"/>
<line x1="987.11" y1="128" x2="987.11" y2="134" stroke="#b5b5b5" stroke-width="1"/>
<line x1="999.8" y1="102" x2="999.8" y2="134" stroke="#bdbdbd" stroke-width="1"/>
<line x1="1012.49" y1="128" x2="1012.49" y2="134" stroke="#b5b5b5" stroke-width="1"/>
<line x1="1025.17" y1="124" x2="1025.17" y2="134" stroke="#b5b5b5" stroke-width="1"/>
<line x1="1037.86" y1="128" x2="1037.86" y2="134" stroke="#b5b5b5" stroke-width="1"/>
<line x1="1050.55" y1="121" x2="1050.55" y2="134" stroke="#b5b5b5" stroke-width="1"/>
<line x1="1063.24" y1="128" x2="1063.24" y2="134" stroke="#b5b5b5" stroke-width="1"/>
<line x1="1075.92" y1="124" x2="1075.92" y2="134" stroke="#b5b5b5" stroke-width="1"/>
<line x1="1088.61" y1="128" x2="1088.61" y2="134" stroke="#b5b5b5" stroke-width="1"/>
<line x1="1101.3" y1="102" x2="1101.3" y2="134" stroke="#bdbdbd" stroke-width="1"/>
<line x1="1113.99" y1="128" x2="1113.99" y2="134" stroke="#b5b5b5" stroke-width="1"/>
<line x1="1126.67" y1="124" x2="1126.67" y2="134" stroke="#b5b5b5" stroke-width="1"/>
<line x1="1139.36" y1="128" x2="1139.36" y2="134" stroke="#b5b5b5" stroke-width="1"/>
<line x1="1152.05" y1="121" x2="1152.05" y2="134" stroke="#b5b5b5" stroke-width="1"/>
<line x1="1164.74" y1="128" x2="1164.74" y2="134" stroke="#b5b5b5" stroke-width="1"/>
<line x1="1177.42" y1="124" x2="1177.42" y2="134" stroke="#b5b5b5" stroke-width="1"/>
<line x1="1190.11" y1="128" x2="1190.11" y2="134" stroke="#b5b5b5" stroke-width="1"/>
<line x1="1202.8" y1="102" x2="1202.8" y2="134" stroke="#bdbdbd" stroke-width="1"/>
<line x1="1215.49" y1="128" x2="1215.49" y2="134" stroke="#b5b5b5" stroke-width="1"/>
<line x1="1228.17" y1="124" x2="1228.17" y2="134" stroke="#b5b5b5" stroke-width="1"/>
<line x1="1240.86" y1="128" x2="1240.86" y2="134" stroke="#b5b5b5" stroke-width="1"/>
<line x1="1253.55" y1="121" x2="1253.55" y2="134" stroke="#b5b5b5" stroke-width="1"/>
<line x1="1266.24" y1="128" x2="1266.24" y2="134" stroke="#b5b5b5" stroke-width="1"/>
<line x1="1278.92" y1="124" x2="1278.92" y2="134" stroke="#b5b5b5" stroke-width="1"/>
<line x1="1291.61" y1="128" x2="1291.61" y2="134" stroke="#b5b5b5" stroke-width="1"/>
<line x1="1304.3" y1="102" x2="1304.3" y2="134" stroke="#bdbdbd" stroke-width="1"/>
<line x1="1316.99" y1="128" x2="1316.99" y2="134" stroke="#b5b5b5" stroke-width="1"/>
<line x1="1329.67" y1="124" x2="1329.67" y2="134" stroke="#b5b5b5" stroke-width="1"/>
<line x1="1342.36" y1="128" x2="1342.36" y2="134" stroke="#b5b5b5" stroke-width="1"/>
<line x1="1355.05" y1="121" x2="1355.05" y2="134" stroke="#b5b5b5" stroke-width="1"/>
<line x1="1367.74" y1="128" x2="1367.74" y2="134" stroke="#b5b5b5" stroke-width="1"/>
<line x1="1380.42" y1="124" x2="1380.42" y2="134" stroke="#b5b5b5" stroke-width="1"/>
<line x1="1393.11" y1="128" x2="1393.11" y2="134" stroke="#b5b5b5" stroke-width="1"/>
<line x1="1405.8" y1="102" x2="1405.8" y2="134" stroke="#bdbdbd" stroke-width="1"/>
<line x1="1418.49" y1="128" x2="1418.49" y2="134" stroke="#b5b5b5" stroke-width="1"/>
<line x1="1431.17" y1="124" x2="1431.17" y2="134" stroke="#b5b5b5" stroke-width="1"/>
<line x1="1443.86" y1="128" x2="1443.86" y2="134" stroke="#b5b5b5" stroke-width="1"/>
<line x1="1456.55" y1="121" x2="1456.55" y2="134" stroke="#b5b5b5" stroke-width="1"/>
<line x1="1469.24" y1="128" x2="1469.24" y2="134" stroke="#b5b5b5" stroke-width="1"/>
<line x1="1481.92" y1="124" x2="1481.92" y2="134" stroke="#b5b5b5" stroke-width="1"/>
<line x1="1494.61" y1="128" x2="1494.61" y2="134" stroke="#b5b5b5" stroke-width="1"/>
<text x="92.3" y="120" font-size="16" fill="#666">3</text>
<text x="193.8" y="120" font-size="16" fill="#666">4</text>
<text x="295.3" y="120" font-size="16" fill="#666">5</text>
<text x="396.8" y="120" font-size="16" fill="#666">6</text>
<text x="498.3" y="120" font-size="16" fill="#666">7</text>
<text x="599.8" y="120" font-size="16" fill="#666">8</text>
<text x="701.3" y="120" font-size="16" fill="#666">9</text>
<text x="802.8" y="120" font-size="16" fill="#666">10</text>
<text x="904.3" y="120" font-size="16" fill="#666">11</text>
<text x="1005.8" y="120" font-size="16" fill="#666">12</text>
<text x="1107.3" y="120" font-size="16" fill="#666">13</text>
<text x="1208.8" y="120" font-size="16" fill="#666">14</text>
<text x="1310.3" y="120" font-size="16" fill="#666">15</text>
<text x="1411.8" y="120" font-size="16" fill="#666">16</text>
<rect x="0" y="0" width="1500" height="30" fill="#40444b"/>
<rect x="0" y="29" width="1500" height="1" fill="#2b2e33"/>
<text x="783" y="3" font-size="24" fill="#fff" text-anchor="middle">Untitled</text>
<rect x="-10" y="64.3" width="29.3" height="23.8" rx="2.5" fill="#fff" stroke="#cfcfcf" stroke-width="1.4"/>
<path d="M 3 72.3 L 11 72.3 L 7 78.7 Z" fill="#222"/>
<rect x="27.5" y="64.3" width="24" height="23.8" rx="2.5" fill="#fff" stroke="#cfcfcf" stroke-width="1.4"/>
<text x="39.5" y="79.8" font-size="13.5" fill="#3a3a3a" text-anchor="middle">?</text>
<line x1="72.8" y1="42.5" x2="72.8" y2="89.2" stroke="#cdcdcd" stroke-width="1.5"/>
<line x1="236" y1="42.5" x2="236" y2="89.2" stroke="#cdcdcd" stroke-width="1.5"/>
<line x1="449.6" y1="42.5" x2="449.6" y2="89.2" stroke="#cdcdcd" stroke-width="1.5"/>
<line x1="532" y1="42.5" x2="532" y2="89.2" stroke="#cdcdcd" stroke-width="1.5"/>
<line x1="794" y1="42.5" x2="794" y2="89.2" stroke="#cdcdcd" stroke-width="1.5"/>
<line x1="951.3" y1="42.5" x2="951.3" y2="89.2" stroke="#cdcdcd" stroke-width="1.5"/>
<path d="M 114.5 70.5 Q 114.5 66.5 118.5 66.5 M 132.5 66.5 Q 136.5 66.5 136.5 70.5 M 136.5 84.5 Q 136.5 88.5 132.5 88.5 M 118.5 88.5 Q 114.5 88.5 114.5 84.5 M 122.5 66.5 L 128.5 66.5 M 122.5 88.5 L 128.5 88.5 M 114.5 74.5 L 114.5 80.5 M 136.5 74.5 L 136.5 80.5" fill="none" stroke="#222" stroke-width="1.9"/>
<circle cx="121.4" cy="73.2" r="2.1" fill="none" stroke="#222" stroke-width="1.4"/>
<circle cx="129.4" cy="73.2" r="2.1" fill="none" stroke="#222" stroke-width="1.4"/>
<circle cx="121.4" cy="81.2" r="2.1" fill="none" stroke="#222" stroke-width="1.4"/>
<path d="M 128 79.5 L 135.5 82.3 L 132 83.8 L 130.5 87.3 Z" fill="#222" stroke="#222" stroke-width="0.8" stroke-linejoin="round"/>
<path d="M 181 87 L 183.1 80.6 L 197.3 66.5 A 3 3 0 0 1 201.5 70.7 L 187.4 84.9 Z M 183.1 80.6 L 187.4 84.9" fill="none" stroke="#222" stroke-width="1.7" stroke-linejoin="round"/>
<path d="M 208 74.4 L 215.5 74.4 L 211.75 80 Z" fill="#222"/>
<path d="M 355.6 74.4 L 363.1 74.4 L 359.35 80 Z" fill="#222"/>
<path d="M 422 74.4 L 429.5 74.4 L 425.75 80 Z" fill="#222"/>
<path d="M 503 74.4 L 510.5 74.4 L 506.75 80 Z" fill="#222"/>
<line x1="264" y1="68" x2="264" y2="86" stroke="#c8c8c8" stroke-width="1.6"/>
<rect x="268" y="73.5" width="14" height="8" rx="2" fill="none" stroke="#c8c8c8" stroke-width="1.5"/>
<path d="M 289.6 74.4 L 297.4 74.4 L 293.5 80 Z" fill="#c8c8c8"/>
<path d="M 328 76.5 L 328 69.5 Q 328 67.8 329.7 67.8 L 335.5 67.8 Q 337.2 67.8 337.2 69" fill="none" stroke="#222" stroke-width="1.8" stroke-linecap="round"/>
<rect x="332.6" y="71.8" width="10.4" height="10.4" rx="1.6" fill="none" stroke="#222" stroke-width="1.8"/>
<path d="M 338.6 85.6 L 346 85.6 Q 347.6 85.6 347.6 84 L 347.6 78.2" fill="none" stroke="#222" stroke-width="1.8" stroke-linecap="round"/>
<path d="M 402.5 67 L 395 87 L 402.5 87 Z" fill="none" stroke="#222" stroke-width="1.8" stroke-linejoin="round"/>
<path d="M 406 67 L 413.5 87 L 406 87 Z" fill="none" stroke="#222" stroke-width="1.8" stroke-linejoin="round"/>
<path d="M 485.5 67 L 496.5 75 L 492.5 88 L 478.5 88 L 474.5 75 Z" fill="none" stroke="#222" stroke-width="1.6" stroke-dasharray="3 2" stroke-linejoin="round"/>
<path d="M 485.5 72 L 491.5 76.5 L 489.5 83.5 L 481.5 83.5 L 479.5 76.5 Z" fill="none" stroke="#222" stroke-width="1.6" stroke-linejoin="round"/>
<rect x="671.2" y="52" width="13" height="10.3" rx="1.8" fill="none" stroke="#222" stroke-width="1.8"/>
<path d="M 673.9 52 L 673.9 49.3 Q 673.9 45.8 677.4 45.8 Q 680.9 45.8 680.9 49.3 L 680.9 52" fill="none" stroke="#222" stroke-width="1.8"/>
<ellipse cx="677.4" cy="56.8" rx="0.9" ry="1.8" fill="#222"/>
<path d="M 656.6 61.5 L 656.6 56.6 L 665.5 56.6 M 688.5 56.6 L 695.6 56.6 L 695.6 61.5" fill="none" stroke="#c4c4c4" stroke-width="1.5"/>
<path d="M 821.2 72.2 A 10 10 0 0 1 839.4 74.8 M 820.2 79.6 A 10 10 0 0 0 838.6 81.8" fill="none" stroke="#222" stroke-width="1.9"/>
<path d="M 819.8 67.8 L 819.8 74.4 L 825.2 74.4 M 833.6 80.7 L 839.6 80.7 L 839.6 87" fill="none" stroke="#222" stroke-width="1.9" stroke-linejoin="miter"/>
<rect x="574.5" y="64.2" width="79" height="23.299999999999997" rx="3.5" fill="#fff" stroke="#d4d4d4" stroke-width="1.2"/>
<line x1="636" y1="64.7" x2="636" y2="87" stroke="#d4d4d4" stroke-width="1.2"/>
<path d="M 640.7 73.5 L 649.3 73.5 L 645.0 68 Z M 640.7 77.5 L 649.3 77.5 L 645.0 83 Z" fill="#222"/>
<text x="582.5" y="80.9" font-size="16" fill="#454545" textLength="38.5" lengthAdjust="spacingAndGlyphs">3.973</text>
<rect x="693.5" y="64.2" width="78.5" height="23.299999999999997" rx="3.5" fill="#fff" stroke="#d4d4d4" stroke-width="1.2"/>
<line x1="754.7" y1="64.7" x2="754.7" y2="87" stroke="#d4d4d4" stroke-width="1.2"/>
<path d="M 759.3000000000001 73.5 L 767.9 73.5 L 763.6 68 Z M 759.3000000000001 77.5 L 767.9 77.5 L 763.6 83 Z" fill="#222"/>
<text x="702.5" y="80.9" font-size="16" fill="#454545" textLength="33.8" lengthAdjust="spacingAndGlyphs">7.413</text>
<rect x="851.5" y="65.5" width="78.60000000000002" height="23.299999999999997" rx="3.5" fill="#fff" stroke="#d4d4d4" stroke-width="1.2"/>
<line x1="912.7" y1="66" x2="912.7" y2="88.3" stroke="#d4d4d4" stroke-width="1.2"/>
<path d="M 917.3500000000001 73.5 L 925.95 73.5 L 921.6500000000001 68 Z M 917.3500000000001 77.5 L 925.95 77.5 L 921.6500000000001 83 Z" fill="#222"/>
<text x="860" y="80.9" font-size="16" fill="#454545" textLength="9.2" lengthAdjust="spacingAndGlyphs">0</text>
<rect x="990.9" y="64.2" width="78.19999999999993" height="23.299999999999997" rx="3.5" fill="#fff" stroke="#d4d4d4" stroke-width="1.2"/>
<line x1="1050.9" y1="64.7" x2="1050.9" y2="87" stroke="#d4d4d4" stroke-width="1.2"/>
<path d="M 1055.95 73.5 L 1064.55 73.5 L 1060.25 68 Z M 1055.95 77.5 L 1064.55 77.5 L 1060.25 83 Z" fill="#222"/>
<text x="999.2" y="80.9" font-size="16" fill="#454545" textLength="34.4" lengthAdjust="spacingAndGlyphs">7.081</text>
<rect x="1101.0" y="64.2" width="77.70000000000005" height="23.299999999999997" rx="3.5" fill="#fff" stroke="#d4d4d4" stroke-width="1.2"/>
<line x1="1160.8" y1="64.7" x2="1160.8" y2="87" stroke="#d4d4d4" stroke-width="1.2"/>
<path d="M 1165.7 73.5 L 1174.3 73.5 L 1170.0 68 Z M 1165.7 77.5 L 1174.3 77.5 L 1170.0 83 Z" fill="#222"/>
<text x="1108.5" y="80.9" font-size="16" fill="#454545" textLength="40.3" lengthAdjust="spacingAndGlyphs">0.953</text>
<text x="94.7" y="52.9" font-size="14.3" fill="#555" letter-spacing="0.2">Select All</text>
<text x="184" y="52.9" font-size="14.3" fill="#555" letter-spacing="0.2">Edit</text>
<text x="261.6" y="52.9" font-size="14.3" fill="#c4c4c4" letter-spacing="0.2">Align</text>
<text x="317.6" y="52.9" font-size="14.3" fill="#555" letter-spacing="0.2">Arrange</text>
<text x="398" y="52.9" font-size="14.3" fill="#555" letter-spacing="0.2">Flip</text>
<text x="472" y="52.9" font-size="14.3" fill="#555" letter-spacing="0.2">Offset</text>
<text x="554" y="52.9" font-size="14.3" fill="#555" letter-spacing="0.2">Size</text>
<text x="816.4" y="52.9" font-size="14.3" fill="#555" letter-spacing="0.2">Rotate</text>
<text x="974" y="52.9" font-size="14.3" fill="#555" letter-spacing="0.2">Position</text>
<text x="554.7" y="79.6" font-size="14" fill="#505050">W</text>
<text x="676" y="79.6" font-size="14" fill="#505050">H</text>
<text x="974.4" y="79.6" font-size="14" fill="#505050">X</text>
<text x="1085.6" y="79.6" font-size="14" fill="#505050">Y</text>
<rect x="500.5" y="230.5" width="403" height="600" fill="none" stroke="#858585" stroke-width="1.6"/>
<rect x="492.5" y="222.5" width="15.2" height="15.2" fill="#fff" stroke="#7d7d7d" stroke-width="1.6"/>
<rect x="895.5" y="222.5" width="15.2" height="15.2" fill="#fff" stroke="#7d7d7d" stroke-width="1.6"/>
<rect x="621.7" y="177" width="160.4" height="30" rx="3" fill="#222"/>
<text x="638.8" y="198.5" font-size="17" fill="#fff" stroke="#fff" stroke-width="0.45" textLength="125" lengthAdjust="spacingAndGlyphs" style="white-space:pre">3.97  in x 7.41  in</text>
<path d="M 522.5 285.2 L 642.8 94.5 L 630.6 86.7 L 662.8 72.4 L 663.6 107.1 L 651.5 100.2 L 530.1 291.8 Z" fill="#d23a1c"/>
<path d="M 708 95.5 L 708 132.5 L 716.8 125.2 L 723.2 139.5 L 730 136.5 L 724 123.5 L 736.5 123.5 Z" fill="#000" stroke="#fff" stroke-width="2.8" stroke-linejoin="round"/>
<ellipse cx="82.2" cy="737" rx="67" ry="52" fill="#c7381d"/>
<text x="31" y="738" font-family="Liberation Serif" font-style="italic" font-size="43" fill="#fff8f0" textLength="71" lengthAdjust="spacingAndGlyphs">Craft</text>
<text x="109.6" y="728.3" font-family="Liberation Serif" font-weight="bold" font-size="9.5" fill="#fff8f0" textLength="27" lengthAdjust="spacingAndGlyphs">WITH</text>
<path d="M 108 734.5 C 116 730, 126 737, 138 730.5" fill="none" stroke="#fff8f0" stroke-width="1.4"/>
<path d="M 121 765 C 131 757, 137 745, 131 741.5 C 124 738.5, 112 742, 102 748" fill="none" stroke="#fff8f0" stroke-width="1.3"/>
<text x="40" y="768" font-family="Liberation Serif" font-style="italic" font-size="41" fill="#fff8f0" textLength="84" lengthAdjust="spacingAndGlyphs">Sarah</text>
</svg>
</body></html>
